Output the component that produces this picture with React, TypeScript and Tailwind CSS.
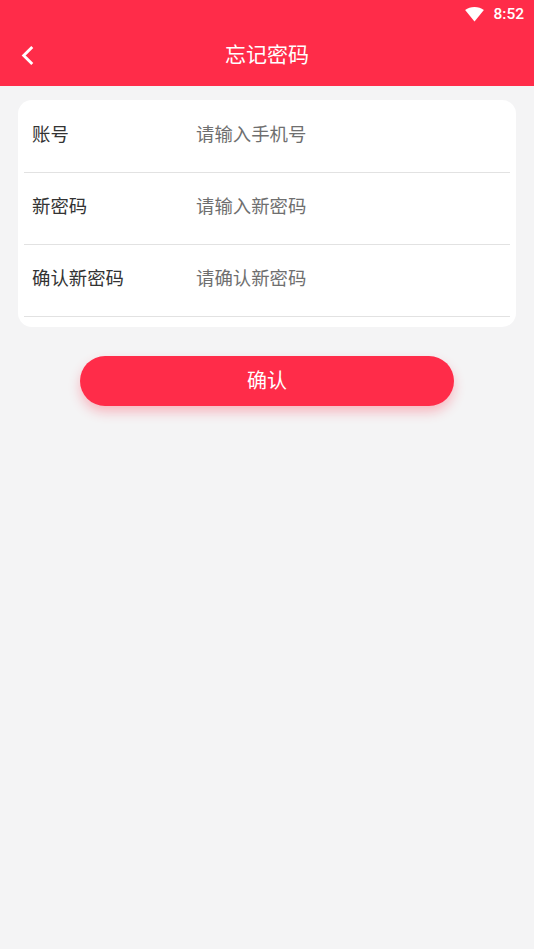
const rows = [
  { label: "账号", hint: "请输入手机号" },
  { label: "新密码", hint: "请输入新密码" },
  { label: "确认新密码", hint: "请确认新密码" },
];

export default function App() {
  return (
    <div className="min-h-[949px] bg-[#f4f4f5] font-['Roboto','Noto_Sans_CJK_SC',sans-serif]">
      <header className="h-[86px] bg-[#ff2c49] text-white">
        <div className="flex h-7 items-center justify-end pr-[10px] pt-[1px]">
          <svg viewBox="0 0 20 16" className="h-[15px] w-[21px] fill-white">
            <path d="M10 15.5 0 3.2C2.8 1.1 6.2 0 10 0s7.2 1.1 10 3.2Z" />
          </svg>
          <span className="ml-2 text-[15.5px] font-medium leading-none">8:52</span>
        </div>
        <div className="relative flex h-[54px] items-center justify-center">
          <svg viewBox="0 0 14 22" className="absolute left-[20px] top-[17px] h-[21px] w-[15px] fill-none stroke-white stroke-[3]">
            <path d="M12 2 3 11l9 9" />
          </svg>
          <h1 className="text-[21px] font-normal leading-none">忘记密码</h1>
        </div>
      </header>

      <main className="px-[18px] pt-[14px]">
        <div className="rounded-[14px] bg-white px-[6px] pb-[10px] pt-[1px]">
          {rows.map((r) => (
            <div key={r.label} className="flex h-[72px] items-start border-b border-[#e2e2e2] pl-2 pt-[20.5px] text-[18.4px] leading-[26px]">
              <span className="w-[164px] text-[#333333]">{r.label}</span>
              <span className="text-[#6f6f6f]">{r.hint}</span>
            </div>
          ))}
        </div>

        <div className="px-[62px] pt-[29px]">
          <button className="flex h-[50px] w-full items-center justify-center rounded-full bg-[#ff2c49] text-[20px] text-white shadow-[0_6px_12px_rgba(255,45,74,0.3)]">
            确认
          </button>
        </div>
      </main>
    </div>
  );
}
